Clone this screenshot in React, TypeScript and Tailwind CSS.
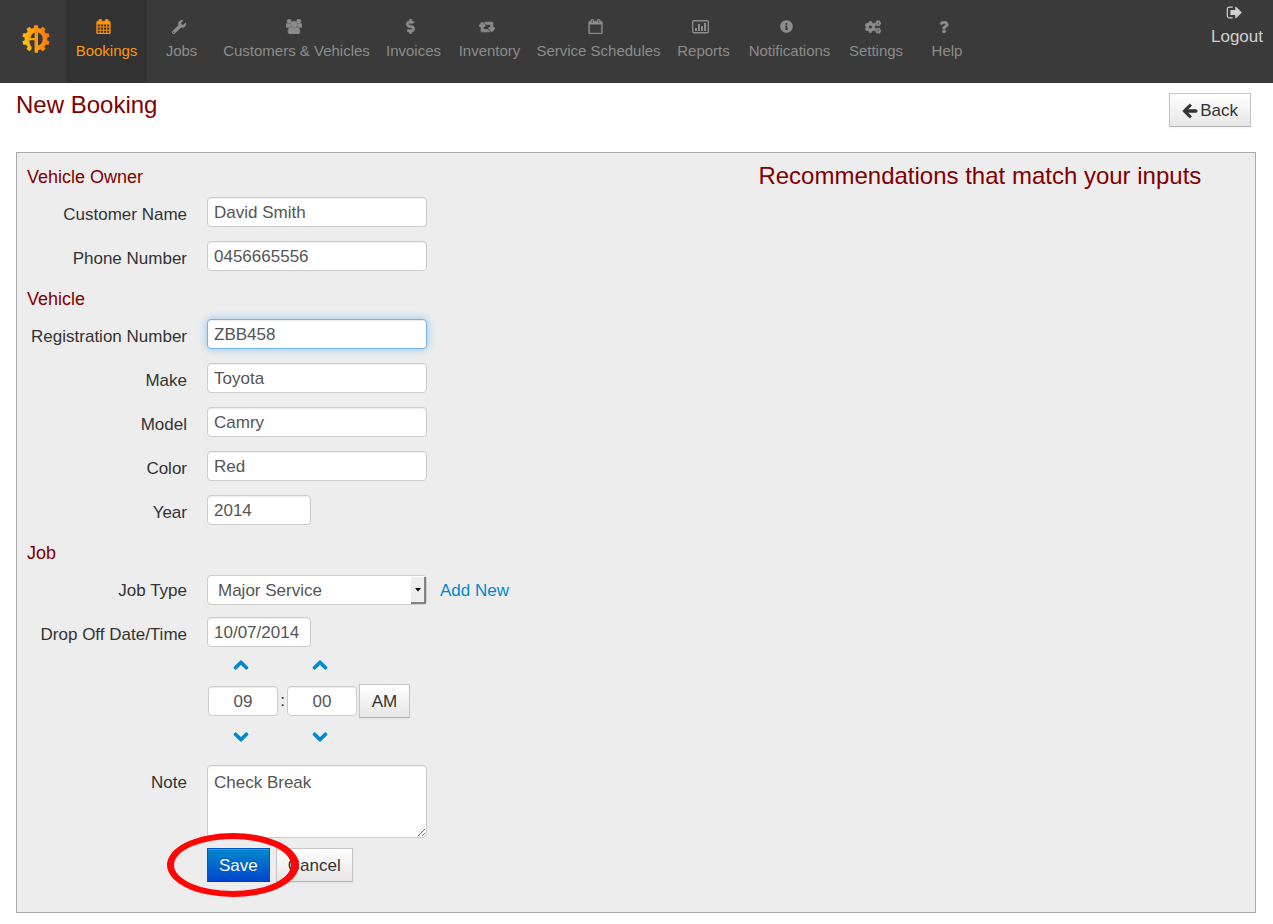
import React from "react";
import {
  FaArrowLeft,
  FaChevronDown,
  FaChevronUp,
  FaCogs,
  FaDollarSign,
  FaInfoCircle,
  FaQuestion,
  FaWrench,
} from "react-icons/fa";

const CALENDAR_RINGS =
  "M576 448v-288q0-13-9.5-22.5t-22.5-9.5h-64q-13 0-22.5 9.5t-9.5 22.5v288q0 13 9.5 22.5t22.5 9.5h64q13 0 22.5-9.5t9.5-22.5zM1344 448v-288q0-13-9.5-22.5t-22.5-9.5h-64q-13 0-22.5 9.5t-9.5 22.5v288q0 13 9.5 22.5t22.5 9.5h64q13 0 22.5-9.5t9.5-22.5z";
const CALENDAR_BODY =
  "M1728 384v1280q0 52-38 90t-90 38h-1408q-52 0-90-38t-38-90v-1280q0-52 38-90t90-38h128v-96q0-66 47-113t113-47h64q66 0 113 47t47 113v96h384v-96q0-66 47-113t113-47h64q66 0 113 47t47 113v96h128q52 0 90 38t38 90z";

function CalendarIcon() {
  return (
    <svg
      viewBox="0 0 1792 1792"
      className="h-[15px] w-[15px]"
      fill="currentColor"
      fillRule="evenodd"
      stroke="currentColor"
      strokeWidth="50"
      aria-hidden="true"
    >
      <path
        d={
          CALENDAR_BODY +
          "M192 1664h288v-288h-288zM544 1664h320v-288h-320zM928 1664h320v-288h-320zM1312 1664h288v-288h-288zM192 1312h288v-320h-288zM544 1312h320v-320h-320zM928 1312h320v-320h-320zM1312 1312h288v-320h-288zM192 928h288v-288h-288zM544 928h320v-288h-320zM928 928h320v-288h-320zM1312 928h288v-288h-288z"
        }
      />
    </svg>
  );
}

function CalendarEmptyIcon() {
  return (
    <svg
      viewBox="0 0 1792 1792"
      className="h-[15px] w-[15px]"
      fill="currentColor"
      fillRule="evenodd"
      stroke="currentColor"
      strokeWidth="50"
      aria-hidden="true"
    >
      <path d={CALENDAR_BODY + CALENDAR_RINGS + "M192 1664h1408v-1024h-1408z"} />
    </svg>
  );
}

function GroupIcon() {
  return (
    <svg
      viewBox="0 0 1920 1792"
      className="h-[15px] w-4"
      fill="currentColor"
      stroke="currentColor"
      strokeWidth="70"
      aria-hidden="true"
    >
      <path d="M593 896q-162 5-265 128h-134q-82 0-138-40.5t-56-118.5q0-353 124-353 6 0 43.5 21t97.5 42.5 119 21.5q67 0 133-23-5 37-5 66 0 139 81 256zm1071 637q0 120-73 189.5t-194 69.5h-874q-121 0-194-69.5t-73-189.5q0-53 3.5-103.5t14-109 26.5-108.5 43-97.5 62-81 85.5-53.5 111.5-20q10 0 43 21.5t73 48 107 48 135 21.5 135-21.5 107-48 73-48 43-21.5q61 0 111.5 20t85.5 53.5 62 81 43 97.5 26.5 108.5 14 109 3.5 103.5zm-1024-1277q0 106-75 181t-181 75-181-75-75-181 75-181 181-75 181 75 75 181zm704 384q0 159-112.5 271.5t-271.5 112.5-271.5-112.5-112.5-271.5 112.5-271.5 271.5-112.5 271.5 112.5 112.5 271.5zm576 225q0 78-56 118.5t-138 40.5h-134q-103-123-265-128 81-117 81-256 0-29-5-66 66 23 133 23 59 0 119-21.5t97.5-42.5 43.5-21q124 0 124 353zm-128-609q0 106-75 181t-181 75-181-75-75-181 75-181 181-75 181 75 75 181z" />
    </svg>
  );
}

function RetweetIcon() {
  return (
    <svg
      viewBox="0 0 1920 1792"
      className="h-[15px] w-4"
      fill="currentColor"
      stroke="currentColor"
      strokeWidth="100"
      aria-hidden="true"
    >
      <path d="M1280 1504q0 13-9.5 22.5t-22.5 9.5h-960q-8 0-13.5-2t-9-7-5.5-8-3-11.5-1-11.5v-600h-192q-26 0-45-19t-19-45q0-24 15-41l320-384q19-22 49-22t49 22l320 384q15 17 15 41 0 26-19 45t-45 19h-192v384h576q16 0 25 11l160 192q7 10 7 21zm640-416q0 24-15 41l-320 384q-20 23-49 23t-49-23l-320-384q-15-17-15-41 0-26 19-45t45-19h192v-384h-576q-16 0-25-12l-160-192q-7-9-7-20 0-13 9.5-22.5t22.5-9.5h960q8 0 13.5 2t9 7 5.5 8 3 11.5 1 11.5v600h192q26 0 45 19t19 45z" />
    </svg>
  );
}

function ChartIcon() {
  return (
    <svg viewBox="0 0 17 15" className="h-[15px] w-[17px]" fill="currentColor" aria-hidden="true">
      <rect x="0.7" y="1.7" width="15.6" height="12" rx="1.2" fill="none" stroke="currentColor" strokeWidth="1.4" />
      <path d="M3 9h2v3H3zM6 5h2v7H6zM9 7h2v5H9zM12 4h2v8h-2z" />
    </svg>
  );
}

function SignOutIcon() {
  return (
    <svg viewBox="0 0 1664 1792" className="h-[17px] w-4" fill="currentColor" aria-hidden="true">
      <path d="M704 1440q0 4 1 20t.5 26.5-3 23.5-10 19.5-20.5 6.5h-320q-119 0-203.5-84.5t-84.5-203.5v-704q0-119 84.5-203.5t203.5-84.5h320q13 0 22.5 9.5t9.5 22.5q0 4 1 20t.5 26.5-3 23.5-10 19.5-20.5 6.5h-320q-66 0-113 47t-47 113v704q0 66 47 113t113 47h312l11.5 1 11.5 3 8 5.5 7 9 2 13.5zm928-544q0 26-19 45l-544 544q-19 19-45 19t-45-19-19-45v-288h-448q-26 0-45-19t-19-45v-384q0-26 19-45t45-19h448v-288q0-26 19-45t45-19 45 19l544 544q19 19 19 45z" />
    </svg>
  );
}

function Logo() {
  const teeth = [0, 36, 72, 108, 144, 180, 216, 252, 288, 324];
  return (
    <svg viewBox="0 0 28 28" className="h-7 w-7" aria-hidden="true">
      <defs>
        <linearGradient id="gear" gradientUnits="userSpaceOnUse" x1="0" y1="16" x2="26" y2="10">
          <stop offset="0" stopColor="#ffc80a" />
          <stop offset="0.5" stopColor="#ff9a0c" />
          <stop offset="1" stopColor="#f7780f" />
        </linearGradient>
        <mask id="monogram">
          <g fill="#fff">
            <circle cx="14" cy="14" r="11.3" />
            {teeth.map((angle) => (
              <path key={angle} d="M11.6 4 12.2.3h3.6L16.400 4z" transform={`rotate(${angle} 14 14)`} />
            ))}
          </g>
          <g fill="#000">
            <path d="M12.600 7.200V13H8.400C9 10.400 10.200 8.600 12.600 7.200z" />
            <path d="M7.400 15.200h5.200V28H9.600V21.800C8.200 20.200 7.400 18 7.400 15.200z" />
            <path d="M16 7.400c3.200.8 4.700 3.400 4.700 6.600s-1.500 5.800-4.700 6.600z" />
          </g>
        </mask>
      </defs>
      <rect width="28" height="28" fill="url(#gear)" mask="url(#monogram)" />
    </svg>
  );
}

const navItems: { label: string; icon: React.ReactNode; active?: boolean }[] = [
  { label: "Bookings", icon: <CalendarIcon />, active: true },
  { label: "Jobs", icon: <FaWrench size={14} /> },
  { label: "Customers & Vehicles", icon: <GroupIcon /> },
  { label: "Invoices", icon: <FaDollarSign size={15} stroke="currentColor" strokeWidth={20} /> },
  { label: "Inventory", icon: <RetweetIcon /> },
  { label: "Service Schedules", icon: <CalendarEmptyIcon /> },
  { label: "Reports", icon: <ChartIcon /> },
  { label: "Notifications", icon: <FaInfoCircle size={13} /> },
  { label: "Settings", icon: <FaCogs size={16} stroke="currentColor" strokeWidth={24} /> },
  { label: "Help", icon: <FaQuestion size={12} stroke="currentColor" strokeWidth={24} /> },
];

function Header() {
  return (
    <header className="flex h-[83px] bg-[#3a3a3a]">
      <a href="#home" aria-label="Home" className="flex w-[66px] shrink-0 items-center pl-[22px] pb-1.5">
        <Logo />
      </a>
      <nav className="grid grid-cols-[81px_69px_161px_73px_79px_139px_71px_101px_72px_70px] text-[15px] leading-5">
        {navItems.map((item) => (
          <a
            key={item.label}
            href={"#" + item.label.toLowerCase().replace(/[^a-z]+/g, "-")}
            className={
              "flex flex-col items-center pt-4 whitespace-nowrap " +
              (item.active ? "bg-[#323232] text-[#ff9610]" : "text-[#8c8c8c]")
            }
          >
            <span className="mr-1.5 flex h-[21px] items-center">{item.icon}</span>
            <span className="mt-1">{item.label}</span>
          </a>
        ))}
      </nav>
      <a href="#logout" className="ml-auto flex flex-col items-center px-2.5 pt-1 leading-5 text-[#d0d0d0]">
        <span className="mr-1.5">
          <SignOutIcon />
        </span>
        <span className="mt-1.5">Logout</span>
      </a>
    </header>
  );
}

const fieldClass =
  "rounded-[4px] border border-[#ccc] bg-white px-1.5 text-[#555] shadow-[inset_0_1px_1px_rgba(0,0,0,0.075)] outline-none";
const buttonClass =
  "h-[34px] border border-[#c5c5c5] border-b-[#b3b3b3] bg-linear-to-b from-white to-[#e6e6e6] pt-0.5 text-[#333] shadow-[inset_0_1px_0_rgba(255,255,255,0.2),0_1px_2px_rgba(0,0,0,0.05)]";

function SectionTitle({ children }: { children: React.ReactNode }) {
  return <h2 className="mb-2 pt-0.5 pl-2.5 text-lg leading-6 text-[#800000]">{children}</h2>;
}

function Row({ label, id, children }: { label: string; id: string; children: React.ReactNode }) {
  return (
    <div className="flex gap-5">
      <label htmlFor={id} className="w-[170px] shrink-0 pt-2 text-right leading-5 text-[#333]">
        {label}
      </label>
      {children}
    </div>
  );
}

function TextRow({
  label,
  id,
  value,
  short,
  focused,
}: {
  label: string;
  id: string;
  value: string;
  short?: boolean;
  focused?: boolean;
}) {
  return (
    <div className="mb-3.5">
      <Row label={label} id={id}>
        <input
          id={id}
          type="text"
          defaultValue={value}
          className={
            "h-[30px] rounded-[4px] border bg-white px-1.5 pt-0.5 text-[#555] outline-none " +
            (short ? "w-[104px] " : "w-[220px] ") +
            (focused
              ? "border-[#6fb5ee] shadow-[inset_0_1px_1px_rgba(0,0,0,0.075),0_0_8px_rgba(82,168,236,0.6)]"
              : "border-[#ccc] shadow-[inset_0_1px_1px_rgba(0,0,0,0.075)]")
          }
        />
      </Row>
    </div>
  );
}

function StepButton({ label, up }: { label: string; up?: boolean }) {
  return (
    <button type="button" aria-label={label} className="flex h-[34px] items-center justify-center pr-1 text-[#0088cc]">
      {up ? (
        <FaChevronUp size={16} stroke="currentColor" strokeWidth={36} />
      ) : (
        <FaChevronDown size={16} stroke="currentColor" strokeWidth={36} />
      )}
    </button>
  );
}

function TimePicker() {
  return (
    <div className="mt-px ml-[191px] grid w-fit grid-cols-[70px_9px_70px_53px] gap-y-0.5">
      <StepButton label="Increase hour" up />
      <span />
      <StepButton label="Increase minute" up />
      <span />
      <input aria-label="Hour" defaultValue="09" className={fieldClass + " my-0.5 h-[30px] w-full pt-0.5 text-center"} />
      <span className="text-center leading-[34px] text-[#333]">:</span>
      <input aria-label="Minute" defaultValue="00" className={fieldClass + " my-0.5 h-[30px] w-full pt-0.5 text-center"} />
      <button type="button" className={buttonClass + " ml-0.5"}>
        AM
      </button>
      <StepButton label="Decrease hour" />
      <span />
      <StepButton label="Decrease minute" />
      <span />
    </div>
  );
}

function BookingForm() {
  return (
    <form className="w-5/9 pt-2.5 pb-[30px]" onSubmit={(event) => event.preventDefault()}>
      <SectionTitle>Vehicle Owner</SectionTitle>
      <TextRow label="Customer Name" id="customer" value="David Smith" />
      <TextRow label="Phone Number" id="phone" value="0456665556" />

      <SectionTitle>Vehicle</SectionTitle>
      <TextRow label="Registration Number" id="registration" value="ZBB458" focused />
      <TextRow label="Make" id="make" value="Toyota" />
      <TextRow label="Model" id="model" value="Camry" />
      <TextRow label="Color" id="color" value="Red" />
      <TextRow label="Year" id="year" value="2014" short />

      <SectionTitle>Job</SectionTitle>
      <div className="mb-3">
        <Row label="Job Type" id="job-type">
          <div className="flex items-center pt-0.5">
            <div className="relative">
              <select
                id="job-type"
                className="block h-[30px] w-[220px] appearance-none rounded-[4px] border border-[#ccc] bg-white pt-0.5 pl-2.5 text-[#555] outline-none"
              >
                <option>Major Service</option>
              </select>
              <span className="pointer-events-none absolute top-0.5 right-px bottom-px flex w-[15px] items-center justify-center border-r-2 border-b-2 border-[#858585] bg-[#eee]">
                <svg viewBox="0 0 6 4" className="h-1 w-1.5" aria-hidden="true">
                  <path d="M0 0h6L3 3.500z" fill="#000" />
                </svg>
              </span>
            </div>
            <a href="#add-job-type" className="ml-[13px] pt-0.5 text-[#0088cc]">
              Add New
            </a>
          </div>
        </Row>
      </div>
      <Row label="Drop Off Date/Time" id="drop-off">
        <input
          id="drop-off"
          type="text"
          defaultValue="10/07/2014"
          className={fieldClass + " h-[30px] w-[104px] pt-0.5"}
        />
      </Row>
      <TimePicker />
      <div className="mt-[11px]">
        <Row label="Note" id="note">
          <textarea
            id="note"
            defaultValue="Check Break"
            className={fieldClass + " block h-[73px] w-[220px] py-[7px] leading-5"}
          />
        </Row>
      </div>
      <div className="mt-2.5 ml-[190px] flex gap-1.5">
        <div className="relative">
          <button
            type="submit"
            className="block h-[34px] border border-[#0055bb] border-b-[#003ea8] bg-linear-to-b from-[#0088cc] to-[#0044cc] px-[11px] pt-0.5 text-white [text-shadow:0_-1px_0_rgba(0,0,0,0.25)] shadow-[inset_0_1px_0_rgba(255,255,255,0.2)]"
          >
            Save
          </button>
          <svg
            viewBox="0 0 132 64"
            className="pointer-events-none absolute -top-[15px] -left-10 z-10 h-16 w-[132px] max-w-none"
            aria-hidden="true"
          >
            <path
              fill="#ff0505"
              fillRule="evenodd"
              d="M66 0a66 32 0 1 0 0 64a66 32 0 1 0 0-64zM65.500 6a58.500 26 0 1 1 0 52a58.500 26 0 1 1 0-52z"
            />
          </svg>
        </div>
        <button type="button" className={buttonClass + " px-[11px]"}>
          Cancel
        </button>
      </div>
    </form>
  );
}

export default function App() {
  return (
    <div className="min-h-screen bg-white font-['Liberation_Sans',Arial,sans-serif] text-[17px]">
      <Header />
      <main className="px-4 pb-3">
        <div className="flex items-start justify-between pt-2.5 pr-1.5">
          <h1 className="text-2xl leading-6 text-[#800000]">New Booking</h1>
          <button type="button" className={buttonClass + " flex items-center gap-0.5 px-3"}>
            <FaArrowLeft size={16} stroke="currentColor" strokeWidth={30} />
            Back
          </button>
        </div>
        <section className="mt-[25px] mr-px flex border border-[#a9a9a9] bg-[#ededed]">
          <BookingForm />
          <h2 className="flex-1 pt-2 text-center text-2xl leading-[30px] text-[#800000]">
            Recommendations that match your inputs
          </h2>
        </section>
      </main>
    </div>
  );
}
